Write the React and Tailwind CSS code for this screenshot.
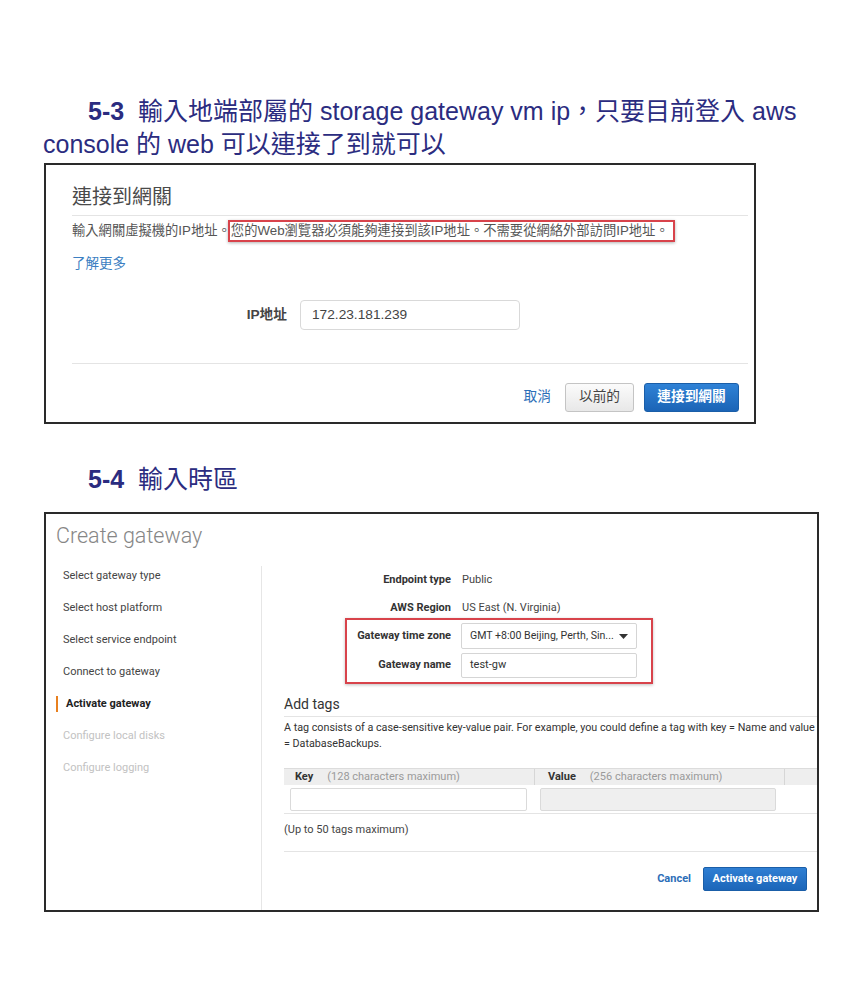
const sidebarSteps = [
  { label: 'Select gateway type', state: 'done' },
  { label: 'Select host platform', state: 'done' },
  { label: 'Select service endpoint', state: 'done' },
  { label: 'Connect to gateway', state: 'done' },
  { label: 'Activate gateway', state: 'active' },
  { label: 'Configure local disks', state: 'todo' },
  { label: 'Configure logging', state: 'todo' },
];

const ConnectPanel = () => (
  <div className="ml-[44px] mt-[2px] h-[261px] w-[712px] border-2 border-[#2a2a2a] bg-white pl-[26px] pr-[6px] pt-[18px] text-[#555]">
    <h2 className="border-b border-[#e4e4e4] pb-[4px] text-[20px] leading-[28px] text-[#4a4a4a]">連接到網關</h2>
    <p className="mt-[5px] whitespace-nowrap text-[13.3px] leading-[20px]">
      輸入網關虛擬機的IP地址。
      <span className="relative">
        您的Web瀏覽器必須能夠連接到該IP地址。不需要從網絡外部訪問IP地址。
        <span className="absolute -left-[3px] -right-[6px] top-1/2 h-[22px] -translate-y-1/2 border-2 border-[#d8434b] shadow-[0_1px_3px_rgba(0,0,0,0.3)]" />
      </span>
    </p>
    <p className="mt-[13px] text-[13.5px] leading-[20px] text-[#3c7fc2]">了解更多</p>

    <div className="mt-[26px] flex items-center text-[13.7px]">
      <span className="w-[215px] text-right font-bold text-[#444]">IP地址</span>
      <div className="ml-[13px] flex h-[30px] w-[220px] items-center rounded-[4px] border border-[#d9d9d9] pl-[11px] text-[#444]">
        172.23.181.239
      </div>
    </div>

    <div className="mt-[33px] border-t border-[#e4e4e4]" />

    <div className="mt-[19px] flex items-center justify-end pr-[9px] text-[13.7px]">
      <span className="mr-[14px] text-[#2c6eb8]">取消</span>
      <button className="h-[29px] w-[69px] rounded-[3px] border border-[#c4c4c4] bg-gradient-to-b from-[#fbfbfb] to-[#e8e8e8] text-[#444]">
        以前的
      </button>
      <button className="ml-[10px] h-[29px] w-[95px] rounded-[3px] border border-[#1a5ea8] bg-gradient-to-b from-[#2f82d6] to-[#1b64b6] font-bold text-white">
        連接到網關
      </button>
    </div>
  </div>
);

const FormRow = ({ label, children, className = '' }) => (
  <div className={`flex h-[26px] items-center ${className}`}>
    <span className="w-[189px] text-right font-bold text-[#333]">{label}</span>
    {children}
  </div>
);

const GatewayPanel = () => (
  <div className="ml-[44px] mt-[16px] flex h-[400px] w-[775px] flex-col border-2 border-[#2a2a2a] bg-white font-['Roboto','Liberation_Sans',sans-serif] text-[11px] leading-[16px]">
    <h2 className="pl-[10px] pt-[8px] text-[21.5px] font-light leading-[28px] text-[#868686]">Create gateway</h2>

    <div className="mt-[16px] flex min-h-0 flex-1">
      {/* Steps */}
      <aside className="flex w-[216px] shrink-0 flex-col gap-[16px] border-r border-[#e6e6e6] pl-[17px] pt-[2px]">
        {sidebarSteps.map((step) =>
          step.state === 'active' ? (
            <div key={step.label} className="-ml-[7px] border-l-2 border-[#e8801f] pl-[8px] font-bold text-[#222]">
              {step.label}
            </div>
          ) : (
            <div key={step.label} className={step.state === 'todo' ? 'text-[#c2c2c2]' : 'text-[#444]'}>
              {step.label}
            </div>
          )
        )}
      </aside>

      {/* Form */}
      <main className="min-w-0 flex-1 overflow-hidden pt-[1px]">
        <FormRow label="Endpoint type">
          <span className="ml-[11px] text-[#444]">Public</span>
        </FormRow>
        <FormRow label="AWS Region" className="mt-[2px]">
          <span className="ml-[11px] text-[#444]">US East (N. Virginia)</span>
        </FormRow>

        <div className="relative mt-[2px]">
          <FormRow label="Gateway time zone">
            <div className="ml-[10px] flex h-[26px] w-[176px] items-center justify-between rounded-[2px] border border-[#d5d5d5] pl-[8px] pr-[8px] text-[#333]">
              <span className="whitespace-nowrap text-[10.6px]">GMT +8:00 Beijing, Perth, Sin...</span>
              <svg width="9" height="5" viewBox="0 0 9 5" className="shrink-0">
                <path d="M0 0h9L4.5 5z" fill="#333" />
              </svg>
            </div>
          </FormRow>
          <FormRow label="Gateway name" className="mt-[3px]">
            <div className="ml-[10px] flex h-[25px] w-[176px] items-center rounded-[2px] border border-[#d5d5d5] pl-[8px] text-[#333]">
              test-gw
            </div>
          </FormRow>
          <div className="absolute -bottom-[6px] -top-[5px] left-[83px] w-[308px] border-2 border-[#d8434b] shadow-[0_1px_3px_rgba(0,0,0,0.25)]" />
        </div>

        <div className="pl-[22px]">
          <h3 className="mt-[16px] border-b border-[#e4e4e4] pb-[2px] text-[14px] leading-[20px] text-[#333]">Add tags</h3>
          <p className="mt-[3px] whitespace-nowrap text-[10.75px] text-[#333]">
            A tag consists of a case-sensitive key-value pair. For example, you could define a tag with key = Name and value
            <br />= DatabaseBackups.
          </p>

          <div className="mt-[16px] w-[620px]">
            <div className="flex h-[17px] items-center border-t border-[#dcdcdc] bg-[#eeeeee]">
              <div className="flex w-[250px] shrink-0 pl-[11px]">
                <span className="font-bold text-[#333]">Key</span>
                <span className="ml-[14px] text-[#9a9a9a]">(128 characters maximum)</span>
              </div>
              <div className="flex h-full w-[250px] shrink-0 items-center border-l border-[#d6d6d6] pl-[13px]">
                <span className="font-bold text-[#333]">Value</span>
                <span className="ml-[14px] text-[#9a9a9a]">(256 characters maximum)</span>
              </div>
              <div className="h-full flex-1 border-l border-[#d6d6d6]" />
            </div>
            <div className="flex border-b border-[#e4e4e4] pb-[2px] pt-[3px]">
              <div className="w-[250px] shrink-0 pl-[6px]">
                <div className="h-[23px] w-[237px] rounded-[2px] border border-[#dadada] bg-white" />
              </div>
              <div className="w-[250px] shrink-0 pl-[6px]">
                <div className="h-[23px] w-[236px] rounded-[2px] border border-[#dadada] bg-[#efefef]" />
              </div>
            </div>
          </div>

          <p className="mt-[8px] text-[#444]">(Up to 50 tags maximum)</p>

          <div className="mt-[13px] flex items-center justify-end border-t border-[#e4e4e4] pr-[10px] pt-[15px]">
            <span className="mr-[12px] font-bold text-[#2c6eb8]">Cancel</span>
            <button className="h-[24px] w-[104px] rounded-[2px] border border-[#1a5ea8] bg-gradient-to-b from-[#2f7fd3] to-[#1c66b9] font-bold text-white">
              Activate gateway
            </button>
          </div>
        </div>
      </main>
    </div>
  </div>
);

export default function App() {
  return (
    <div className="min-h-screen bg-white pb-[80px] pt-[95px] font-['Liberation_Sans','Noto_Sans_CJK_TC',sans-serif]">
      <p className="whitespace-nowrap pl-[43px] indent-[45px] text-[25px] leading-[33px] text-[#2b2c80]">
        <span className="font-bold">5-3</span>&nbsp; 輸入地端部屬的 storage gateway vm ip，只要目前登入 aws
        <br />
        console 的 web 可以連接了到就可以
      </p>

      <ConnectPanel />

      <p className="mt-[39px] pl-[88px] text-[25px] leading-[33px] text-[#2b2c80]">
        <span className="font-bold">5-4</span>&nbsp; 輸入時區
      </p>

      <GatewayPanel />
    </div>
  );
}
